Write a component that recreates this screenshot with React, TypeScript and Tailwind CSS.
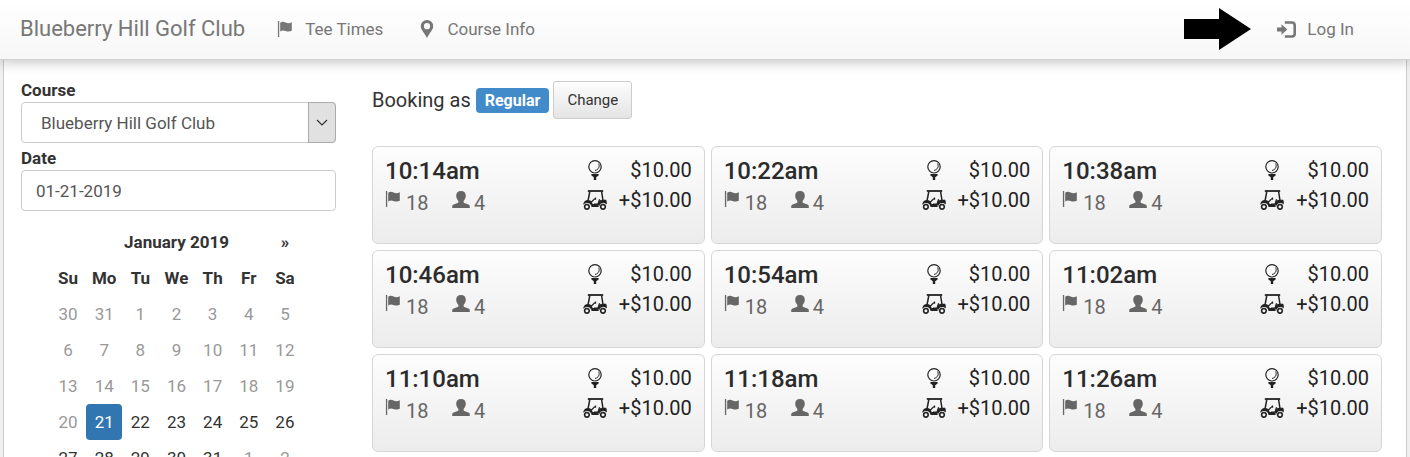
import React, { useState } from "react";

type IconProps = { className?: string };

const times = [
  "10:14am", "10:22am", "10:38am",
  "10:46am", "10:54am", "11:02am",
  "11:10am", "11:18am", "11:26am",
];

const weekDays = ["Su", "Mo", "Tu", "We", "Th", "Fr", "Sa"];

const weeks = [
  [30, 31, 1, 2, 3, 4, 5],
  [6, 7, 8, 9, 10, 11, 12],
  [13, 14, 15, 16, 17, 18, 19],
  [20, 21, 22, 23, 24, 25, 26],
  [27, 28, 29, 30, 31, 1, 2],
];

function FlagIcon({ className }: IconProps) {
  return (
    <svg viewBox="0 0 16 16" className={className} fill="currentColor" aria-hidden="true">
      <path d="M.9 0h1.300v16H.9z" />
      <path d="M3.200 1.700C4.800.5 6.600.5 8.600 1.500c1.900.9 4 .9 6.200-.2v8.500c-2.100 1-4.300 1-6.300.1-1.900-.8-3.600-.7-5.300.5z" />
    </svg>
  );
}

function PinIcon({ className }: IconProps) {
  return (
    <svg viewBox="0 0 14 18" className={className} fill="currentColor" aria-hidden="true">
      <path fillRule="evenodd" d="M7 0a6.200 6.200 0 0 1 6.200 6.200c0 3.800-3.900 6.800-6.200 11.800C4.700 13 .8 10 .8 6.200A6.200 6.200 0 0 1 7 0zm0 3.100a3.100 3.100 0 1 0 0 6.200 3.100 3.100 0 0 0 0-6.200z" />
    </svg>
  );
}

function LoginIcon({ className }: IconProps) {
  return (
    <svg viewBox="0 0 20 17" className={className} aria-hidden="true">
      <path d="M0 6.400h4.500V3.200l5.800 5.300-5.800 5.300v-3.200H0z" fill="currentColor" />
      <path d="M7.800 1.500h7.200a2.700 2.700 0 0 1 2.700 2.700v8.600a2.700 2.700 0 0 1-2.700 2.700H7.800" fill="none" stroke="currentColor" strokeWidth="2.600" />
    </svg>
  );
}

function UserIcon({ className }: IconProps) {
  return (
    <svg viewBox="0 0 18 17" className={className} fill="currentColor" aria-hidden="true">
      <path d="M9 0c3.200 0 4.800 2 4.800 4.800 0 2-.9 3.900-2.200 5.100v1c0 .5.300.9.800 1.100l3.900 1.400c1 .4 1.500 1.100 1.500 2V17H.2v-1.600c0-.9.5-1.600 1.500-2L5.600 12c.5-.2.8-.6.8-1.100v-1C5.100 8.700 4.200 6.800 4.200 4.800 4.200 2 5.800 0 9 0z" />
    </svg>
  );
}

function BallIcon({ className }: IconProps) {
  return (
    <svg viewBox="0 0 14 20" className={className} fill="none" stroke="currentColor" aria-hidden="true">
      <circle cx="7" cy="6.800" r="6.200" strokeWidth="1.200" />
      <path d="M10.600 3.600c1.500 2.900-.1 6.200-3.600 6.900" strokeWidth="1" />
      <path d="M3.400 14h7.200v1.500L8.200 17.200V20H5.800v-2.800L3.400 15.500z" fill="currentColor" stroke="none" />
    </svg>
  );
}

function CartIcon({ className }: IconProps) {
  return (
    <svg viewBox="0 0 24 20" className={className} fill="none" stroke="currentColor" aria-hidden="true">
      <path d="M4.800 1h15.400" strokeWidth="1.800" />
      <path d="M6.800 1.500 5 11M18.600 1.500l1.400 9" strokeWidth="1.500" />
      <path d="M8.200 12.200l3.600-3.600M12.500 7.500v2.200M11 14.200h4l1.600-5" strokeWidth="1.300" />
      <path d="M0 14.800c.5-2.900 2.200-4.900 5-4.900 2.500 0 4 1.500 4.600 4h5l1.200 3H8.600c-.4-2.500-2-3.900-4.300-3.900-1.700 0-2.900.6-4.300 1.800z" fill="currentColor" stroke="none" />
      <path d="M14.800 14c.6-2.600 2.100-4.200 4.600-4.200h3.700c.7 1.300.9 2.900.7 4.700-1-1-2.200-1.500-3.600-1.500-2.200 0-3.700 1.400-4.100 3.700z" fill="currentColor" stroke="none" />
      <circle cx="3.900" cy="16.800" r="2.300" strokeWidth="1.600" />
      <circle cx="20" cy="16.800" r="2.300" strokeWidth="1.600" />
    </svg>
  );
}

function TeeTime({ time }: { time: string }) {
  return (
    <li className="flex h-[98px] justify-between rounded-md border border-[#d6d6d6] bg-linear-to-b from-[#fdfdfd] to-[#ececec] px-3 pt-2">
      <div>
        <h3 className="text-2xl leading-8 font-medium text-[#2b2b2b]">{time}</h3>
        <div className="flex items-start text-xl leading-8 text-[#666]">
          <FlagIcon className="mt-1 mr-[5px] size-4" />
          <span className="w-[46px]">18</span>
          <UserIcon className="mt-1 mr-1 h-[17px] w-[18px]" />
          <span>4</span>
        </div>
      </div>
      <div className="grid h-15 grid-cols-[24px_auto] items-center gap-x-3 text-right text-xl leading-7 text-[#222]">
        <BallIcon className="h-5 w-3.5 justify-self-center" />
        <span>$10.00</span>
        <CartIcon className="h-5 w-6" />
        <span>+$10.00</span>
      </div>
    </li>
  );
}

function Calendar() {
  const [selected, setSelected] = useState(21);

  return (
    <table className="mt-[13px] ml-[29px] w-[253px] table-fixed border-collapse text-center">
      <thead>
        <tr className="h-9">
          <th></th>
          <th colSpan={5} className="font-bold">January 2019</th>
          <th><button aria-label="Next month" className="font-bold">»</button></th>
        </tr>
        <tr className="h-9">
          {weekDays.map((day) => (
            <th key={day} className="p-0 font-bold">{day}</th>
          ))}
        </tr>
      </thead>
      <tbody>
        {weeks.map((week, row) => (
          <tr key={row}>
            {week.map((day, col) => {
              const index = row * 7 + col;
              const muted = index < 22 || index > 32;
              const active = !muted && day === selected;
              return (
                <td key={col} className="p-0">
                  <button
                    disabled={muted}
                    onClick={() => setSelected(day)}
                    className={
                      active
                        ? "block h-9 w-full rounded bg-[#3276b1] text-white"
                        : muted
                        ? "block h-9 w-full text-[#999]"
                        : "block h-9 w-full"
                    }
                  >
                    {day}
                  </button>
                </td>
              );
            })}
          </tr>
        ))}
      </tbody>
    </table>
  );
}

export default function App() {
  const [date, setDate] = useState("01-21-2019");

  return (
    <div className="min-h-screen bg-[#f0f0f0] font-[Roboto,sans-serif] text-[17px] leading-6 text-[#333]">
      <header className="relative flex h-15 items-center border-b border-[#d4d4d4] bg-linear-to-b from-white to-[#f7f7f7] pr-14 pb-px pl-5 text-[#777] shadow-[0_2px_12px_rgba(0,0,0,0.25)]">
        <a href="#" className="text-[22px]">Blueberry Hill Golf Club</a>
        <nav className="ml-8 flex flex-1 items-center">
          <a href="#" className="flex items-center gap-3">
            <FlagIcon className="size-4" />
            Tee Times
          </a>
          <a href="#" className="ml-9 flex items-center gap-3">
            <PinIcon className="h-[18px] w-4" />
            Course Info
          </a>
          <svg viewBox="0 0 67 42" className="ml-auto h-[42px] w-[67px]" aria-hidden="true">
            <path d="M0 11h35V0l32 21-32 21V31H0z" fill="#000" />
          </svg>
          <a href="#" className="ml-[26px] flex items-center gap-2.5">
            <LoginIcon className="h-[17px] w-5" />
            Log In
          </a>
        </nav>
      </header>

      <div className="mx-[3px] flex gap-9 border-x border-[#ccc] bg-white pt-[18px] pr-6 pl-[17px]">
        <aside className="w-[315px] shrink-0">
          <label htmlFor="course" className="block font-bold">Course</label>
          <div className="relative">
            <select id="course" className="block h-[41px] w-full appearance-none rounded border border-[#ccc] bg-white pl-[19px] text-[#555]">
              <option>Blueberry Hill Golf Club</option>
            </select>
            <span className="pointer-events-none absolute inset-y-0 right-0 flex w-7 items-center justify-center rounded-r border border-[#aaa] bg-[#e1e1e1]">
              <svg viewBox="0 0 12 8" className="h-2 w-3" fill="none" stroke="#333" strokeWidth="1.200" aria-hidden="true">
                <path d="M1 1l5 5 5-5" />
              </svg>
            </span>
          </div>
          <label htmlFor="date" className="mt-[3px] block font-bold">Date</label>
          <input
            id="date"
            value={date}
            onChange={(e) => setDate(e.target.value)}
            className="block h-[41px] w-full rounded border border-[#ccc] bg-white px-3.5 text-[#555]"
          />
          <Calendar />
        </aside>

        <main className="flex-1">
          <div className="flex items-center pt-[3px]">
            <span className="text-xl">Booking as</span>
            <span className="ml-[5px] rounded bg-[#428bca] px-[9px] text-base leading-[25px] font-bold text-white">Regular</span>
            <button className="ml-1 h-[38px] rounded-[3px] border border-[#ccc] bg-linear-to-b from-[#fdfdfd] to-[#e4e4e4] px-[13px] text-[15px]">
              Change
            </button>
          </div>
          <ul className="mt-[27px] grid grid-cols-3 gap-1.5">
            {times.map((time) => (
              <TeeTime key={time} time={time} />
            ))}
          </ul>
        </main>
      </div>
    </div>
  );
}
